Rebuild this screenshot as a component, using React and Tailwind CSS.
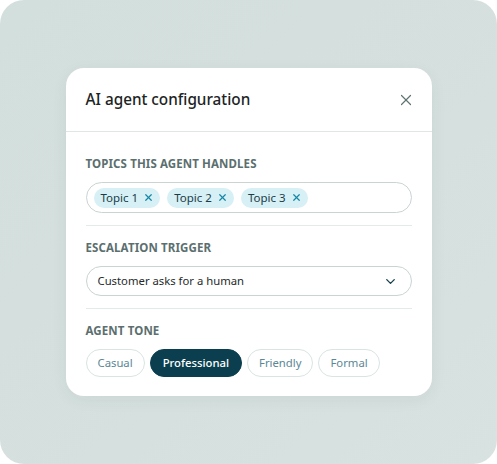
import { X, ChevronDown } from "lucide-react";

const topics = ["Topic 1", "Topic 2", "Topic 3"];
const tones = ["Casual", "Professional", "Friendly", "Formal"];

function Label({ children }) {
  return (
    <p className="text-[11.5px] leading-4 font-bold uppercase tracking-[0.01em] text-[#5b6f6f]">
      {children}
    </p>
  );
}

export default function App() {
  return (
    <div className="bg-white">
      <div
        className="w-[497px] h-[464px] rounded-[24px] bg-gradient-to-br from-[#d3dfdd] to-[#d8e2e0] flex items-center justify-center"
        style={{ fontFamily: '"Noto Sans", "Open Sans", sans-serif' }}
      >
        <div className="w-[366px] bg-white rounded-[18px] shadow-[0_4px_16px_rgba(30,60,60,0.06)]">
          {/* HEADER */}
          <div className="h-[64px] px-5 flex items-center justify-between border-b border-[#dfe7e6]">
            <h1 className="text-[15.3px] font-medium text-[#1c2424]">AI agent configuration</h1>
            <X className="w-[18px] h-[18px] text-[#5f7373] mr-[-3px]" strokeWidth={1.6} />
          </div>

          <div className="px-5 pt-6 pb-[19px]">
            {/* TOPICS */}
            <div className="pb-3 border-b border-[#e3eaea]">
              <Label>Topics this agent handles</Label>
              <div className="mt-2.5 h-[31px] rounded-full border border-[#c9d4d3] flex items-center gap-[7px] px-[7px]">
                {topics.map((t) => (
                  <span
                    key={t}
                    className="h-[20px] pl-[7px] pr-[6px] rounded-full bg-[#d6f0f6] text-[#1b3d47] text-[11.5px] flex items-center gap-[5px]"
                  >
                    {t}
                    <X className="w-[11px] h-[11px] text-[#1587a6]" strokeWidth={2.6} />
                  </span>
                ))}
              </div>
            </div>

            {/* ESCALATION */}
            <div className="pt-3.5 pb-3 border-b border-[#e3eaea]">
              <Label>Escalation trigger</Label>
              <div className="mt-2.5 h-[30px] rounded-full border border-[#c9d4d3] flex items-center justify-between pl-[11px] pr-[13px]">
                <span className="text-[11.3px] text-[#1f2b2b]">Customer asks for a human</span>
                <ChevronDown className="w-[15px] h-[15px] text-[#16404c]" strokeWidth={2.2} />
              </div>
            </div>

            {/* TONE */}
            <div className="pt-3.5">
              <Label>Agent tone</Label>
              <div className="mt-2.5 flex gap-[5px]">
                {tones.map((t) =>
                  t === "Professional" ? (
                    <span
                      key={t}
                      className="h-[28px] px-[12px] rounded-full bg-[#0b3f4f] border border-[#0b3f4f] text-white text-[11.3px] font-medium flex items-center"
                    >
                      {t}
                    </span>
                  ) : (
                    <span
                      key={t}
                      className="h-[28px] px-[11px] rounded-full border border-[#d9e4e3] text-[#5a8795] text-[11.3px] flex items-center"
                    >
                      {t}
                    </span>
                  )
                )}
              </div>
            </div>
          </div>
        </div>
      </div>
    </div>
  );
}
